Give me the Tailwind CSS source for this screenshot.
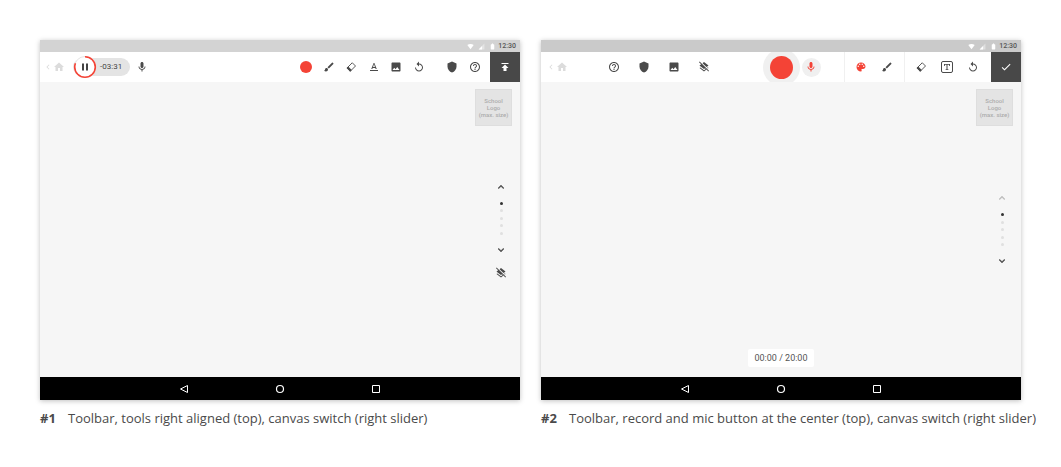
<!DOCTYPE html>
<html lang="en">
<head>
<meta charset="utf-8">
<title>Toolbar variants</title>
<script src="https://cdn.jsdelivr.net/npm/@tailwindcss/browser@4"></script>
</head>
<body class="bg-white font-['Open_Sans',sans-serif] text-[#4a4a4a]">
<svg class="hidden" aria-hidden="true">
  <symbol id="back" viewBox="0 0 24 24"><path d="M15.41 7.41 14 6l-6 6 6 6 1.41-1.41L10.83 12z"/></symbol>
  <symbol id="home" viewBox="0 0 24 24"><path d="M10 20v-6h4v6h5v-8h3L12 3 2 12h3v8z"/></symbol>
  <symbol id="mic" viewBox="0 0 24 24"><path d="M12 14c1.66 0 2.99-1.34 2.99-3L15 5c0-1.66-1.34-3-3-3S9 3.34 9 5v6c0 1.66 1.34 3 3 3zm5.3-3c0 3-2.54 5.1-5.3 5.1S6.7 14 6.7 11H5c0 3.41 2.72 6.23 6 6.72V21h2v-3.28c3.28-.48 6-3.3 6-6.72h-1.7z"/></symbol>
  <symbol id="brush" viewBox="0 0 24 24"><path d="M7 14c-1.66 0-3 1.34-3 3 0 1.31-1.16 2-2 2 .92 1.22 2.49 2 4 2 2.21 0 4-1.79 4-4 0-1.66-1.34-3-3-3zm13.71-9.37-1.34-1.34c-.39-.39-1.02-.39-1.41 0L9 12.25 11.75 15l8.96-8.96c.39-.39.39-1.02 0-1.41z"/></symbol>
  <symbol id="eraser" viewBox="0 0 24 24"><path fill="none" stroke="currentColor" stroke-width="1.800" stroke-linejoin="round" d="M14.500 3.500 21 10 10.500 20.500 4 14z"/><path d="M6.500 11 13.500 18l-3 3.500L3 14z"/></symbol>
  <symbol id="text" viewBox="0 0 24 24"><path d="M4 18v2h16v-2H4zm5.500-4.200h5l.9 2.200h2.100L12.750 4h-1.500L6.500 16h2.100l.9-2.200zM12 6.200l1.870 5.800h-3.740L12 6.200z"/></symbol>
  <symbol id="image" viewBox="0 0 24 24"><path d="M21 19V5c0-1.100-.9-2-2-2H5c-1.100 0-2 .9-2 2v14c0 1.100.9 2 2 2h14c1.100 0 2-.9 2-2zM8.500 13.500l2.500 3.010L14.500 12l4.500 6H5l3.500-4.500z"/></symbol>
  <symbol id="undo" viewBox="0 0 24 24"><path d="M12 5V1L7 6l5 5V7c3.310 0 6 2.690 6 6s-2.690 6-6 6-6-2.690-6-6H4c0 4.420 3.580 8 8 8s8-3.580 8-8-3.580-8-8-8z"/></symbol>
  <symbol id="shield" viewBox="0 0 24 24"><path d="M12 1 3 5v6c0 5.550 3.840 10.740 9 12 5.160-1.260 9-6.450 9-12V5l-9-4z"/></symbol>
  <symbol id="help" viewBox="0 0 24 24"><path d="M11 18h2v-2h-2v2zm1-16C6.480 2 2 6.480 2 12s4.480 10 10 10 10-4.480 10-10S17.520 2 12 2zm0 18c-4.410 0-8-3.590-8-8s3.590-8 8-8 8 3.590 8 8-3.590 8-8 8zm0-14c-2.210 0-4 1.790-4 4h2c0-1.100.9-2 2-2s2 .9 2 2c0 2-3 1.750-3 5h2c0-2.250 3-2.500 3-5 0-2.210-1.790-4-4-4z"/></symbol>
  <symbol id="publish" viewBox="0 0 24 24"><path d="M5 4v2h14V4H5zm0 10h4v6h6v-6h4l-7-7-7 7z"/></symbol>
  <symbol id="check" viewBox="0 0 24 24"><path d="M9 16.170 4.830 12l-1.420 1.410L9 19 21 7l-1.410-1.410z"/></symbol>
  <symbol id="layers-off" viewBox="0 0 24 24"><path d="M19.810 14.990l1.190-.92-1.430-1.430-1.190.92 1.430 1.430zm-.45-4.720L21 9l-9-7-2.910 2.270 7.870 7.880 2.400-1.880zM3.270 1 2 2.270l4.220 4.220L3 9l1.630 1.270L12 16l2.100-1.630 1.430 1.430L12 18.540l-7.370-5.730L3 14.070l9 7 4.950-3.850L20.730 21 22 19.730 3.270 1z"/></symbol>
  <symbol id="palette" viewBox="0 0 24 24"><path d="M12 3c-4.970 0-9 4.030-9 9s4.030 9 9 9c.83 0 1.500-.67 1.500-1.500 0-.39-.15-.74-.39-1.010-.23-.26-.38-.61-.38-.99 0-.83.67-1.500 1.500-1.500H16c2.760 0 5-2.240 5-5 0-4.420-4.030-8-9-8zm-5.500 9c-.83 0-1.500-.67-1.500-1.500S5.670 9 6.500 9 8 9.670 8 10.500 7.330 12 6.500 12zm3-4C8.670 8 8 7.330 8 6.500S8.670 5 9.500 5s1.500.67 1.500 1.500S10.330 8 9.500 8zm5 0c-.83 0-1.500-.67-1.500-1.500S13.670 5 14.500 5s1.500.67 1.500 1.500S15.330 8 14.500 8zm3 4c-.83 0-1.500-.67-1.500-1.500S16.670 9 17.500 9s1.500.67 1.500 1.500-.67 1.500-1.500 1.500z"/></symbol>
  <symbol id="textbox" viewBox="0 0 24 24"><rect x="1" y="1" width="22" height="22" rx="3" fill="none" stroke="currentColor" stroke-width="2"/><path d="M6 6h12v4h-1.500L16 7.700h-3v8.800l2 .4V18H9v-1.100l2-.4V7.700H8L7.500 10H6z"/></symbol>
  <symbol id="up" viewBox="0 0 24 24"><path stroke="currentColor" stroke-width=".8" d="m12 8-6 6 1.410 1.410L12 10.830l4.590 4.580L18 14z"/></symbol>
  <symbol id="down" viewBox="0 0 24 24"><path stroke="currentColor" stroke-width=".8" d="M16.590 8.590 12 13.170 7.410 8.590 6 10l6 6 6-6z"/></symbol>
  <symbol id="wifi" viewBox="0 0 24 24"><path d="M1 7c6-5 16-5 22 0L12 21z"/></symbol>
  <symbol id="signal" viewBox="0 0 24 24"><path opacity=".4" d="M2 22h20V2z"/><path d="M2 22h12V10z"/></symbol>
  <symbol id="battery" viewBox="0 0 24 24"><path d="M16 4h-2V2h-4v2H8a2 2 0 0 0-2 2v14a2 2 0 0 0 2 2h8a2 2 0 0 0 2-2V6a2 2 0 0 0-2-2z"/></symbol>
  <symbol id="nav-back" viewBox="0 0 10 10"><path fill="none" stroke="currentColor" d="M8.500 1.500v7L1.500 5z"/></symbol>
  <symbol id="nav-home" viewBox="0 0 10 10"><circle cx="5" cy="5" r="3.500" fill="none" stroke="currentColor" stroke-width="1.200"/></symbol>
  <symbol id="nav-recent" viewBox="0 0 10 10"><path fill="none" stroke="currentColor" d="M1.500 1.500h7v7h-7z"/></symbol>
</svg>

<main class="grid grid-cols-2 gap-[21px] p-10">
  <figure class="min-w-0">
    <div class="flex aspect-4/3 flex-col bg-[#f6f6f6] font-[Roboto,sans-serif] shadow-[0_1px_5px_rgba(0,0,0,0.25)]">
      <div class="flex h-3 items-center justify-end gap-1 bg-[#d3d3d3] pr-1 text-[7px] leading-3 font-medium text-[#555]">
        <svg class="size-[7px] fill-white"><use href="#wifi"/></svg>
        <svg class="size-[7px] fill-white"><use href="#signal"/></svg>
        <svg class="size-[7px] fill-white"><use href="#battery"/></svg>
        <span class="-ml-0.5">12:30</span>
      </div>
      <div class="flex h-[30px] items-center bg-white">
        <button aria-label="Home" class="flex items-center pl-[3px] text-[#dcdcdc]">
          <svg class="size-2.5 fill-current"><use href="#back"/></svg>
          <svg class="size-3 fill-current"><use href="#home"/></svg>
        </button>
        <button aria-label="Pause recording" class="ml-2 flex h-[18px] items-center rounded-full bg-[#e4e4e4] pr-2 text-[8px] text-[#444]">
          <svg class="mr-[3px] size-6" viewBox="0 0 24 24"><circle cx="12" cy="12" r="11" fill="#fff"/><circle cx="12" cy="12" r="10.500" fill="none" stroke="#e4e4e4"/><circle cx="12" cy="12" r="10.300" fill="none" stroke="#f44336" stroke-width="1.600" pathLength="100" stroke-dasharray="81 19" transform="rotate(-90 12 12)"/><path fill="#444" d="M9 8.500h2v7H9zm4 0h2v7h-2z"/></svg>
          <span>-03:31</span>
        </button>
        <button aria-label="Microphone" class="ml-1.5"><svg class="size-3 fill-current"><use href="#mic"/></svg></button>
        <div class="ml-auto flex w-[125px] items-center justify-between">
          <button aria-label="Record" class="size-3 rounded-full bg-[#f44336]"></button>
          <button aria-label="Brush"><svg class="size-3 fill-current"><use href="#brush"/></svg></button>
          <button aria-label="Eraser"><svg class="size-3 fill-current"><use href="#eraser"/></svg></button>
          <button aria-label="Text"><svg class="size-3 fill-current"><use href="#text"/></svg></button>
          <button aria-label="Image"><svg class="size-3 fill-current"><use href="#image"/></svg></button>
          <button aria-label="Undo"><svg class="size-3 fill-current"><use href="#undo"/></svg></button>
        </div>
        <div class="mr-[9px] ml-[21px] flex gap-[11px]">
          <button aria-label="Shield"><svg class="size-3 fill-current"><use href="#shield"/></svg></button>
          <button aria-label="Help"><svg class="size-3 fill-current"><use href="#help"/></svg></button>
        </div>
        <button aria-label="Publish" class="flex h-full w-[30px] items-center justify-center bg-[#484848] text-white"><svg class="size-3 fill-current"><use href="#publish"/></svg></button>
      </div>
      <div class="grid flex-1">
        <div class="col-start-1 row-start-1 mt-[7px] mr-2 flex size-[37px] items-center justify-center self-start justify-self-end bg-[#e4e4e4] text-center text-[6px] leading-[7px] font-medium text-[#acacac] outline outline-[#dedede] -outline-offset-1">School<br>Logo<br>(max. size)</div>
        <div class="col-start-1 row-start-1 mr-[13px] flex flex-col items-center gap-[9px] self-center justify-self-end">
          <button aria-label="Previous canvas"><svg class="size-3 fill-current"><use href="#up"/></svg></button>
          <div class="flex h-[33px] flex-col justify-between">
            <i class="size-[3px] rounded-full bg-[#333]"></i><i class="size-[3px] rounded-full bg-[#e0e0e0]"></i><i class="size-[3px] rounded-full bg-[#e0e0e0]"></i><i class="size-[3px] rounded-full bg-[#e0e0e0]"></i><i class="size-[3px] rounded-full bg-[#e0e0e0]"></i>
          </div>
          <button aria-label="Next canvas"><svg class="size-3 fill-current"><use href="#down"/></svg></button>
          <button aria-label="Clear layers" class="pt-0.5"><svg class="size-3 fill-current"><use href="#layers-off"/></svg></button>
        </div>
      </div>
      <div class="flex h-[23px] items-center justify-center gap-[86px] bg-black text-white">
        <button aria-label="System back"><svg class="size-2.5"><use href="#nav-back"/></svg></button>
        <button aria-label="System home"><svg class="size-2.5"><use href="#nav-home"/></svg></button>
        <button aria-label="Recent apps"><svg class="size-2.5"><use href="#nav-recent"/></svg></button>
      </div>
    </div>
    <figcaption class="mt-2 flex text-[13px] leading-5 whitespace-nowrap"><b class="w-7 shrink-0">#1</b><span>Toolbar, tools right aligned (top), canvas switch (right slider)</span></figcaption>
  </figure>

  <figure class="min-w-0">
    <div class="flex aspect-4/3 flex-col bg-[#f6f6f6] font-[Roboto,sans-serif] shadow-[0_1px_5px_rgba(0,0,0,0.25)]">
      <div class="flex h-3 items-center justify-end gap-1 bg-[#cacaca] pr-1 text-[7px] leading-3 font-medium text-[#555]">
        <svg class="size-[7px] fill-white"><use href="#wifi"/></svg>
        <svg class="size-[7px] fill-white"><use href="#signal"/></svg>
        <svg class="size-[7px] fill-white"><use href="#battery"/></svg>
        <span class="-ml-0.5">12:30</span>
      </div>
      <div class="grid grid-cols-[1fr_37px_1fr] grid-rows-[30px] items-center overflow-hidden bg-white">
        <div class="flex items-center">
          <button aria-label="Home" class="flex items-center pl-[5px] text-[#dcdcdc]">
            <svg class="size-2.5 fill-current"><use href="#back"/></svg>
            <svg class="size-3 fill-current"><use href="#home"/></svg>
          </button>
          <div class="ml-10 flex gap-[18px]">
            <button aria-label="Help"><svg class="size-3 fill-current"><use href="#help"/></svg></button>
            <button aria-label="Shield"><svg class="size-3 fill-current"><use href="#shield"/></svg></button>
            <button aria-label="Image"><svg class="size-3 fill-current"><use href="#image"/></svg></button>
            <button aria-label="Clear layers"><svg class="size-3 fill-current"><use href="#layers-off"/></svg></button>
          </div>
        </div>
        <button aria-label="Record" class="flex size-[37px] items-center justify-center rounded-full bg-[#f0f0f0]"><span class="size-[23px] rounded-full bg-[#f44336]"></span></button>
        <div class="flex h-[30px] items-center">
          <button aria-label="Microphone" class="ml-0.5 flex size-[19px] items-center justify-center rounded-full bg-[#f0f0f0] text-[#f44336]"><svg class="size-3 fill-current"><use href="#mic"/></svg></button>
          <div class="ml-auto flex h-full w-[60px] items-center gap-3.5 border-l border-[#f0f0f0] pl-2.5">
            <button aria-label="Colours" class="text-[#f44336]"><svg class="size-3 fill-current"><use href="#palette"/></svg></button>
            <button aria-label="Brush"><svg class="size-3 fill-current"><use href="#brush"/></svg></button>
          </div>
          <div class="flex h-full w-[87px] items-center gap-3.5 border-l border-[#f0f0f0] pl-2.5">
            <button aria-label="Eraser"><svg class="size-3 fill-current"><use href="#eraser"/></svg></button>
            <button aria-label="Text"><svg class="size-3 fill-current"><use href="#textbox"/></svg></button>
            <button aria-label="Undo"><svg class="size-3 fill-current"><use href="#undo"/></svg></button>
          </div>
          <button aria-label="Done" class="flex h-full w-[30px] items-center justify-center bg-[#484848] text-white"><svg class="size-3 fill-current"><use href="#check"/></svg></button>
        </div>
      </div>
      <div class="grid flex-1">
        <div class="col-start-1 row-start-1 mt-[7px] mr-2 flex size-[37px] items-center justify-center self-start justify-self-end bg-[#e4e4e4] text-center text-[6px] leading-[7px] font-medium text-[#acacac] outline outline-[#dedede] -outline-offset-1">School<br>Logo<br>(max. size)</div>
        <div class="col-start-1 row-start-1 mr-[13px] flex flex-col items-center gap-[9px] self-center justify-self-end">
          <button aria-label="Previous canvas" disabled class="text-[#bbb]"><svg class="size-3 fill-current"><use href="#up"/></svg></button>
          <div class="flex h-[33px] flex-col justify-between">
            <i class="size-[3px] rounded-full bg-[#333]"></i><i class="size-[3px] rounded-full bg-[#e0e0e0]"></i><i class="size-[3px] rounded-full bg-[#e0e0e0]"></i><i class="size-[3px] rounded-full bg-[#e0e0e0]"></i><i class="size-[3px] rounded-full bg-[#e0e0e0]"></i>
          </div>
          <button aria-label="Next canvas"><svg class="size-3 fill-current"><use href="#down"/></svg></button>
        </div>
        <div class="col-start-1 row-start-1 mb-2.5 self-end justify-self-center rounded-xs bg-white px-1.5 text-[9px] leading-[18px] text-[#555]">00:00 / 20:00</div>
      </div>
      <div class="flex h-[23px] items-center justify-center gap-[86px] bg-black text-white">
        <button aria-label="System back"><svg class="size-2.5"><use href="#nav-back"/></svg></button>
        <button aria-label="System home"><svg class="size-2.5"><use href="#nav-home"/></svg></button>
        <button aria-label="Recent apps"><svg class="size-2.5"><use href="#nav-recent"/></svg></button>
      </div>
    </div>
    <figcaption class="mt-2 flex text-[13px] leading-5 whitespace-nowrap"><b class="w-7 shrink-0">#2</b><span>Toolbar, record and mic button at the center (top), canvas switch (right slider)</span></figcaption>
  </figure>
</main>
</body>
</html>
